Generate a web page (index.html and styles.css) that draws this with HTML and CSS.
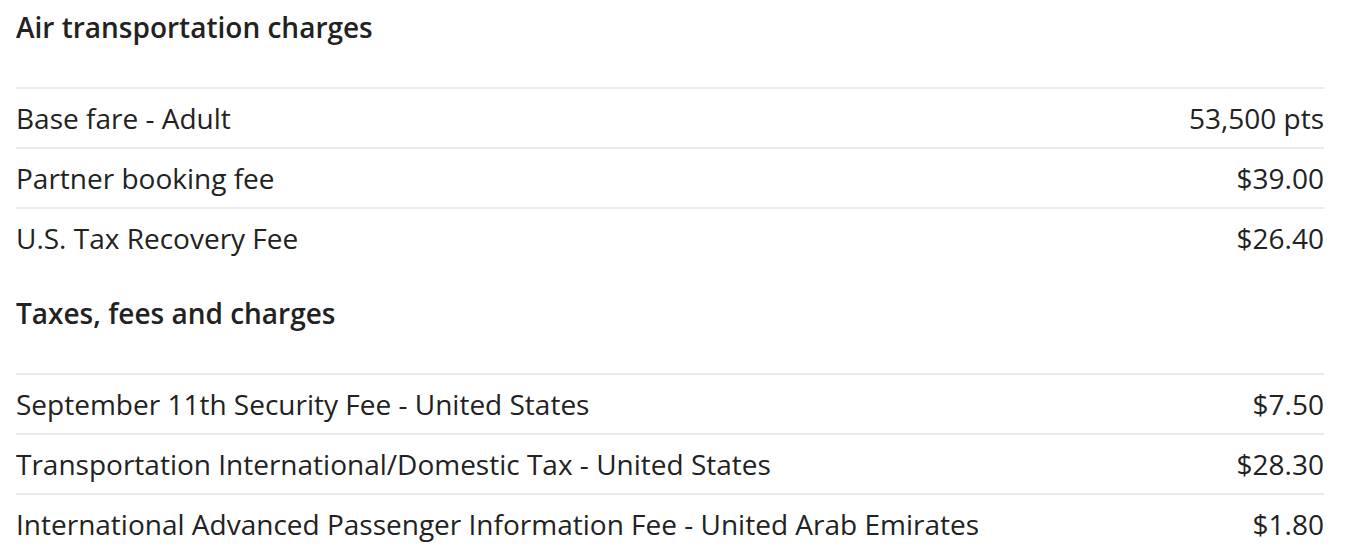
FILE: index.html
```html
<!DOCTYPE html>
<html lang="en">
<head>
<meta charset="utf-8">
<link rel="stylesheet" href="styles.css">
<title>Charges</title>
</head>
<body>
<div class="charges">
  <section class="section first">
    <h2 class="section-title">Air transportation charges</h2>
    <div class="row"><span class="label">Base fare - Adult</span><span class="amount">53,500 pts</span></div>
    <div class="row"><span class="label">Partner booking fee</span><span class="amount">$39.00</span></div>
    <div class="row"><span class="label">U.S. Tax Recovery Fee</span><span class="amount">$26.40</span></div>
  </section>
  <section class="section">
    <h2 class="section-title">Taxes, fees and charges</h2>
    <div class="row"><span class="label">September 11th Security Fee - United States</span><span class="amount">$7.50</span></div>
    <div class="row"><span class="label">Transportation International/Domestic Tax - United States</span><span class="amount">$28.30</span></div>
    <div class="row"><span class="label">International Advanced Passenger Information Fee - United Arab Emirates</span><span class="amount">$1.80</span></div>
  </section>
</div>
</body>
</html>
```
FILE: styles.css
```css
html, body {
  margin: 0;
  padding: 0;
  background: #ffffff;
}
body {
  font-family: "Open Sans", "Liberation Sans", sans-serif;
  color: #222222;
}
.charges {
  margin: 0 22px 0 16px;
}
.section {
  padding-top: 30px;
}
.section.first {
  padding-top: 11px;
}
.section-title {
  margin: 0 0 44px 0;
  font-size: 28px;
  line-height: 32px;
  font-weight: 600;
  color: #222222;
}
.row {
  display: flex;
  justify-content: space-between;
  align-items: center;
  border-top: 2px solid #ebebeb;
  height: 58px;
  font-size: 28px;
  line-height: 32px;
}
```
